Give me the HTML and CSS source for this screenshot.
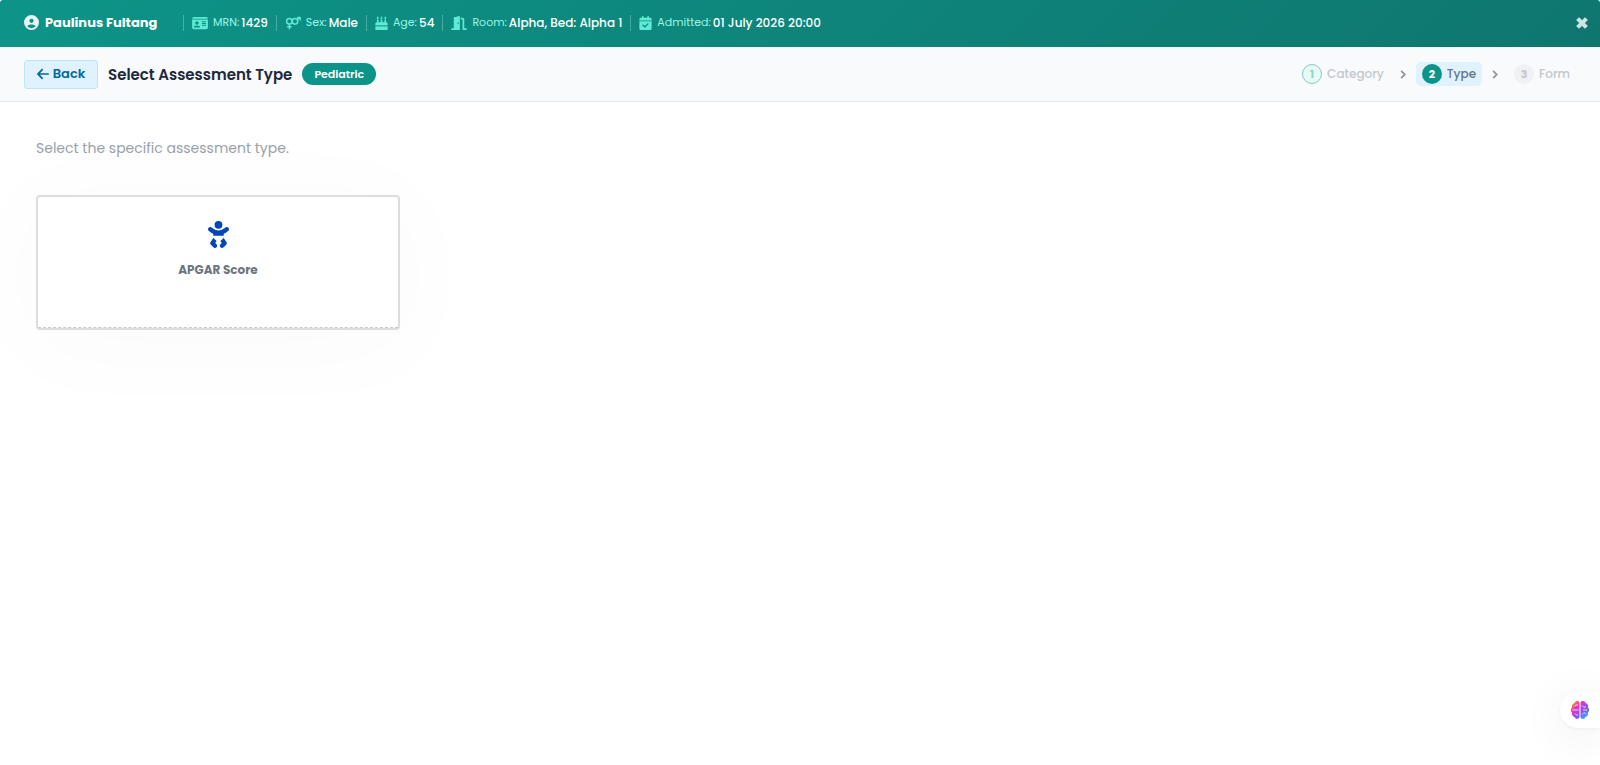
FILE: index.html
```html
<!DOCTYPE html>
<html lang="en">
<head>
  <meta charset="UTF-8">
  <meta name="viewport" content="width=device-width, initial-scale=1.0">
  <title>Select Assessment Type</title>
  <link rel="stylesheet" href="styles.css">
</head>
<body>

  <header class="patient-bar">
    <div class="patient-name">
      <svg class="icon icon-user" viewBox="0 0 512 512"><path d="M399 384.2C376.9 345.8 335.4 320 288 320H224c-47.4 0-88.9 25.8-111 64.2c35.2 39.2 86.2 63.8 143 63.8s107.8-24.7 143-63.8zM0 256a256 256 0 1 1 512 0A256 256 0 1 1 0 256zm256 16a72 72 0 1 0 0-144 72 72 0 1 0 0 144z"/></svg>
      <span>Paulinus Fultang</span>
    </div>
    <div class="patient-info">
      <div class="info-item">
        <svg class="icon wide" viewBox="0 0 576 512"><path fill-rule="evenodd" d="M0 96H576C576 60.7 547.3 32 512 32H64C28.7 32 0 60.7 0 96zM0 128V416c0 35.3 28.7 64 64 64H512c35.3 0 64-28.7 64-64V128zM64 405c0-29 24-53 53-53H235c29 0 53 24 53 53c0 6-5 11-11 11H75c-6 0-11-5-11-11zM176 192a64 64 0 1 1 0 128 64 64 0 1 1 0-128zM368 192H496a16 16 0 0 1 0 32H368a16 16 0 0 1 0-32zM368 256H496a16 16 0 0 1 0 32H368a16 16 0 0 1 0-32zM368 320H496a16 16 0 0 1 0 32H368a16 16 0 0 1 0-32z"/></svg>
        <span class="label">MRN:</span><span class="value">1429</span>
      </div>
      <div class="info-item">
        <svg class="icon wide line" viewBox="0 0 640 512"><circle cx="176" cy="190" r="112"/><circle cx="400" cy="190" r="112"/><path d="M176 302V490M108 408H244M510 38H606V134M600 44L484 126"/></svg>
        <span class="label">Sex:</span><span class="value">Male</span>
      </div>
      <div class="info-item">
        <svg class="icon narrow" viewBox="0 0 448 512"><path d="M86 8C106 36 120 54 120 74a34 34 0 0 1-68 0C52 54 66 36 86 8zM224 8c20 28 34 46 34 66a34 34 0 0 1-68 0c0-20 14-38 34-66zM362 8c20 28 34 46 34 66a34 34 0 0 1-68 0c0-20 14-38 34-66zM56 128h60v96h78v-96h60v96h78v-96h60v96a56 56 0 0 1 56 56v50c-34 28-62 28-96 0c-34 28-62 28-96 0c-34 28-62 28-96 0c-34 28-62 28-96 0c-24 20-42 25-64 18v-68a56 56 0 0 1 56-56zM0 380c24 4 44-2 64-16c34 28 62 28 96 0c34 28 62 28 96 0c34 28 62 28 96 0c34 28 62 28 96 0v148H0z"/></svg>
        <span class="label">Age:</span><span class="value">54</span>
      </div>
      <div class="info-item">
        <svg class="icon wide" viewBox="0 0 576 512"><path fill-rule="evenodd" d="M96 64c0-18 14-32 32-32h40L294 1c14-4 26 7 26 21V512H32a32 32 0 0 1 0-64H96zM256 224a24 32 0 1 0 0 64 24 32 0 1 0 0-64zM352 64h64c35 0 64 29 64 64v320h64a32 32 0 0 1 0 64h-96c-18 0-32-14-32-32V128h-64z"/></svg>
        <span class="label">Room:</span><span class="value">Alpha, Bed: Alpha 1</span>
      </div>
      <div class="info-item">
        <svg class="icon narrow" viewBox="0 0 448 512"><path fill-rule="evenodd" d="M128 0c18 0 32 14 32 32V64H288V32c0-18 14-32 32-32s32 14 32 32V64h48c26 0 48 22 48 48v48H0V112C0 86 22 64 48 64H96V32c0-18 14-32 32-32zM0 192H448V464c0 26-22 48-48 48H48c-26 0-48-22-48-48zM329 305c9-9 9-25 0-34s-25-9-34 0l-95 95-47-47c-9-9-25-9-34 0s-9 25 0 34l64 64c9 9 25 9 34 0z"/></svg>
        <span class="label">Admitted:</span><span class="value">01 July 2026 20:00</span>
      </div>
    </div>
    <button class="close-btn" type="button" aria-label="Close">
      <svg viewBox="0 0 12 12"><path d="M3 3L9 9M9 3L3 9"/></svg>
    </button>
  </header>

  <div class="toolbar">
    <button class="back-btn" type="button">
      <svg class="icon" viewBox="0 0 448 512"><path d="M9.4 233.4c-12.5 12.5-12.5 32.8 0 45.3l160 160c12.5 12.5 32.8 12.5 45.3 0s12.5-32.8 0-45.3L109.2 288H416a32 32 0 0 0 0-64H109.3L214.6 118.6c12.5-12.5 12.5-32.8 0-45.3s-32.8-12.5-45.3 0z"/></svg>
      Back
    </button>
    <h1>Select Assessment Type</h1>
    <span class="badge">Pediatric</span>
    <div class="steps">
      <div class="step done"><span class="step-num">1</span>Category</div>
      <svg class="chevron" viewBox="0 0 6 10"><path d="M1 1L5 5L1 9"/></svg>
      <div class="step active"><span class="step-num">2</span>Type</div>
      <svg class="chevron" viewBox="0 0 6 10"><path d="M1 1L5 5L1 9"/></svg>
      <div class="step"><span class="step-num">3</span>Form</div>
    </div>
  </div>

  <main class="content">
    <p class="intro">Select the specific assessment type.</p>
    <div class="card-grid">
      <button class="card" type="button">
        <span class="card-body">
          <svg class="baby" viewBox="0 0 448 512"><path d="M152 88a72 72 0 1 1 144 0A72 72 0 1 1 152 88zM39.7 144.5c13-17.9 38-21.8 55.9-8.8L131.8 162c26.8 19.5 59.1 30 92.2 30s65.4-10.5 92.2-30l36.2-26.4c17.9-13 42.9-9 55.9 8.8s9 42.9-8.8 55.9l-36.2 26.4c-13.6 9.9-28.1 18.2-43.3 25V288H128V251.7c-15.2-6.7-29.7-15.1-43.3-25L48.5 200.3c-17.9-13-21.8-38-8.8-55.9zM129.5 329.3l60.6 53-26 37.2 24.3 24.3c15.6 15.6 15.6 40.9 0 56.6s-40.9 15.6-56.6 0l-48-48C70 438.6 68.1 417 79.2 401.1zM258 382.3l60.6-53 50.2 71.8c11.1 15.9 9.2 37.5-4.5 51.2l-48 48c-15.6 15.6-40.9 15.6-56.6 0s-15.6-40.9 0-56.6L284 419.4z"/></svg>
          <span class="card-title">APGAR Score</span>
        </span>
      </button>
    </div>
  </main>

  <button class="assistant-btn" type="button" aria-label="Assistant">
    <svg viewBox="0 0 20 20">
      <defs>
        <linearGradient id="brain" x1="0" y1="0" x2="1" y2="1">
          <stop offset="0.1" stop-color="#ff9a2e"/>
          <stop offset="0.3" stop-color="#ee35b4"/>
          <stop offset="0.6" stop-color="#8b50f5"/>
          <stop offset="0.9" stop-color="#20b5ff"/>
        </linearGradient>
      </defs>
      <path fill="url(#brain)" d="M9.5 2.5C8.5 0.5 5 0.5 4.5 3C2 3.5 1.5 6 2 7.5C0.5 8.5 0.5 11.5 2 12.5C1.5 15 3 16.5 4.5 17C5.5 19.5 8.5 19.5 9.5 17.5zM10.5 2.5C11.5 0.5 15 0.5 15.5 3C18 3.5 18.5 6 18 7.5C19.5 8.5 19.5 11.5 18 12.5C18.5 15 17 16.5 15.5 17C14.5 19.5 11.5 19.5 10.5 17.5z"/>
      <path class="folds" d="M4.5 6.5L6 5H8M2.5 10H8.5M5 13.5L6.5 15H8M12 5.5L14 7.5L16 6.5M13 10H17M12 14.5L14 12.5L16 14"/>
    </svg>
  </button>

</body>
</html>
```
FILE: styles.css
```css
* {
  margin: 0;
  padding: 0;
  box-sizing: border-box;
}

body {
  font-family: Poppins, Inter, sans-serif;
  font-size: 12px;
  background: #fff;
  color: #1e293b;
  min-height: 100vh;
  overflow-x: hidden;
}

button {
  font-family: inherit;
  cursor: pointer;
}

.icon {
  width: 14px;
  height: 14px;
  fill: currentColor;
  flex: none;
}

/* patient bar */
.patient-bar {
  display: flex;
  align-items: center;
  height: 47px;
  padding: 0 12px 2px 24px;
  background: linear-gradient(135deg, #0d9488, #0f766e);
  border-radius: 3px 3px 0 0;
  color: #fff;
}

.patient-name {
  display: flex;
  align-items: center;
  gap: 6px;
  width: 159px;
  font-size: 13px;
  font-weight: 700;
  white-space: nowrap;
}

.icon-user {
  width: 15px;
  height: 15px;
  opacity: 0.9;
}

.patient-info {
  display: flex;
}

.info-item {
  display: flex;
  align-items: center;
  height: 16px;
  padding: 0 8px;
  border-left: 1px solid rgba(255, 255, 255, 0.25);
  white-space: nowrap;
}

.info-item .icon {
  color: #5eead4;
  margin-right: 5px;
}

.info-item .wide {
  width: 16px;
}

.info-item .narrow {
  width: 13px;
}

.info-item .line {
  fill: none;
  stroke: currentColor;
  stroke-width: 58;
  stroke-linecap: round;
  stroke-linejoin: round;
}

.label {
  font-size: 11px;
  color: #99f6e4;
  margin-right: 2px;
}

.value {
  font-weight: 500;
}

.close-btn {
  margin-left: auto;
  width: 12px;
  height: 12px;
  border: none;
  background: none;
}

.close-btn svg {
  display: block;
  fill: none;
  stroke: #cfe4e2;
  stroke-width: 4;
  stroke-linecap: square;
}

/* toolbar */
.toolbar {
  display: flex;
  align-items: center;
  height: 55px;
  padding: 0 24px;
  background: #f8fafc;
  border-bottom: 1px solid #e2e8f0;
}

.back-btn {
  display: flex;
  align-items: center;
  justify-content: center;
  gap: 4px;
  width: 74px;
  height: 29px;
  margin-right: 10px;
  border: 1px solid #bae6fd;
  border-radius: 3px;
  background: #e0f2fe;
  color: #0369a1;
  font-size: 13px;
  font-weight: 600;
}

.back-btn .icon {
  width: 12px;
}

.toolbar h1 {
  font-size: 15px;
  font-weight: 600;
  margin-right: 10px;
}

.badge {
  padding: 0 12px;
  border-radius: 11px;
  background: #0d9488;
  color: #fff;
  font-size: 11px;
  font-weight: 600;
  line-height: 22px;
}

.steps {
  display: flex;
  align-items: center;
  margin-left: auto;
}

.step {
  display: flex;
  align-items: center;
  gap: 5px;
  height: 24px;
  padding: 0 6px;
  border-radius: 5px;
  color: #c3c7cd;
  font-weight: 500;
}

.step-num {
  width: 20px;
  height: 20px;
  border-radius: 50%;
  background: #eff1f4;
  font-size: 11px;
  font-weight: 700;
  line-height: 20px;
  text-align: center;
}

.step.done .step-num {
  border: 1px solid #86cac3;
  background: #e6fbf6;
  color: #94d3cb;
  line-height: 18px;
}

.step.active {
  background: #e0f2fe;
  color: #64748b;
}

.step.active .step-num {
  background: #0d9488;
  color: #fff;
}

.chevron {
  width: 6px;
  height: 9px;
  margin: 0 10px;
  fill: none;
  stroke: #92979e;
  stroke-width: 2;
}

/* content */
.content {
  padding: 36px;
}

.intro {
  color: #98a1aa;
  font-size: 14px;
  line-height: 20px;
  margin-bottom: 37px;
}

.card-grid {
  display: grid;
  grid-template-columns: repeat(4, 1fr);
  gap: 24px;
}

.card {
  height: 135px;
  border: 2px solid #dcdede;
  border-radius: 4px;
  background: #fff;
  box-shadow: 0 12px 100px 12px rgba(0, 0, 0, 0.02);
}

.card-body {
  display: flex;
  flex-direction: column;
  align-items: center;
  gap: 13px;
  height: 100%;
  padding-top: 23px;
  border-bottom: 1px dashed #c8cbcd;
}

.baby {
  width: 25px;
  height: 28px;
  fill: #0047ba;
}

.card-title {
  color: #6c757d;
  font-size: 12px;
  font-weight: 700;
  line-height: 18px;
}

/* assistant tab */
.assistant-btn {
  position: fixed;
  right: 0;
  bottom: 37px;
  width: 40px;
  height: 36px;
  padding-left: 10px;
  border: none;
  border-radius: 18px 0 0 18px;
  background: #fff;
  box-shadow: 0 8px 48px rgba(0, 0, 0, 0.08), 0 1px 4px rgba(0, 0, 0, 0.06);
}

.assistant-btn svg {
  display: block;
  width: 20px;
  height: 20px;
}

.folds {
  fill: none;
  stroke: #e6d4fb;
  stroke-width: 1;
}
```
